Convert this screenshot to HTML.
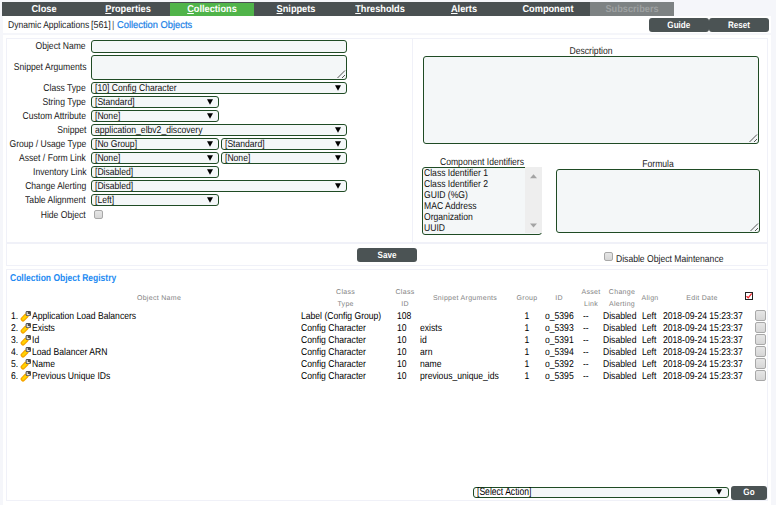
<!DOCTYPE html>
<html><head><meta charset="utf-8"><style>
html,body{margin:0;padding:0}
body{width:776px;height:505px;overflow:hidden;position:relative;background:#f5f6fa;font-family:"Liberation Sans",sans-serif}
body>div,body>svg{position:absolute}
.t{white-space:nowrap;font-variant-ligatures:none;text-rendering:geometricPrecision;-webkit-text-stroke:0}
u{text-decoration:underline}
</style></head><body>
<div style="left:2px;top:2px;width:672px;height:14px;background:#4a5052"></div>
<div class="t" style="left:2.0px;width:84px;text-align:center;top:2.94px;font-size:10px;line-height:14px;letter-spacing:0px;transform:scale(0.92,1);transform-origin:50% 10.46px;color:#fff;font-weight:bold;-webkit-text-stroke:0">Close</div>
<div class="t" style="left:86.0px;width:84px;text-align:center;top:2.94px;font-size:10px;line-height:14px;letter-spacing:0px;transform:scale(0.92,1);transform-origin:50% 10.46px;color:#fff;font-weight:bold;-webkit-text-stroke:0"><u>P</u>roperties</div>
<div style="left:170px;top:3px;width:84px;height:13px;background:#50b44a"></div>
<div class="t" style="left:170.0px;width:84px;text-align:center;top:2.94px;font-size:10px;line-height:14px;letter-spacing:0px;transform:scale(0.92,1);transform-origin:50% 10.46px;color:#fff;font-weight:bold;-webkit-text-stroke:0"><u>C</u>ollections</div>
<div class="t" style="left:254.0px;width:84px;text-align:center;top:2.94px;font-size:10px;line-height:14px;letter-spacing:0px;transform:scale(0.92,1);transform-origin:50% 10.46px;color:#fff;font-weight:bold;-webkit-text-stroke:0"><u>S</u>nippets</div>
<div class="t" style="left:338.0px;width:84px;text-align:center;top:2.94px;font-size:10px;line-height:14px;letter-spacing:0px;transform:scale(0.92,1);transform-origin:50% 10.46px;color:#fff;font-weight:bold;-webkit-text-stroke:0"><u>T</u>hresholds</div>
<div class="t" style="left:422.0px;width:84px;text-align:center;top:2.94px;font-size:10px;line-height:14px;letter-spacing:0px;transform:scale(0.92,1);transform-origin:50% 10.46px;color:#fff;font-weight:bold;-webkit-text-stroke:0"><u>A</u>lerts</div>
<div class="t" style="left:506.0px;width:84px;text-align:center;top:2.94px;font-size:10px;line-height:14px;letter-spacing:0px;transform:scale(0.92,1);transform-origin:50% 10.46px;color:#fff;font-weight:bold;-webkit-text-stroke:0">Component</div>
<div style="left:590px;top:2px;width:84px;height:14px;background:#7d8283"></div>
<div class="t" style="left:590.0px;width:84px;text-align:center;top:2.94px;font-size:10px;line-height:14px;letter-spacing:0px;transform:scale(0.92,1);transform-origin:50% 10.46px;color:#9da1a2;font-weight:bold;-webkit-text-stroke:0">Subscribers</div>
<div style="left:3px;top:16px;width:768px;height:16.5px;background:#fff"></div>
<div class="t" style="left:7.5px;top:19.17px;font-size:9.9px;line-height:14px;letter-spacing:0px;transform:scale(0.865,1);transform-origin:0 10.43px;color:#222">Dynamic Applications</div>
<div class="t" style="left:90.8px;top:19.17px;font-size:9.9px;line-height:14px;letter-spacing:0px;transform:scale(0.9,1);transform-origin:0 10.43px;color:#222">[561]</div>
<div class="t" style="left:112.2px;top:19.17px;font-size:9.9px;line-height:14px;letter-spacing:0px;transform:scale(0.9,1);transform-origin:0 10.43px;color:#555">|</div>
<div class="t" style="left:117px;top:19.17px;font-size:9.9px;line-height:14px;letter-spacing:0px;transform:scale(0.945,1);transform-origin:0 10.43px;color:#1a80e6;-webkit-text-stroke:0.2px currentColor">Collection Objects</div>
<div style="left:649px;top:18px;width:59.6px;height:14px;background:#4b5354;border-radius:3px"></div>
<div class="t" style="left:649.0px;width:59.6px;text-align:center;top:19.28px;font-size:9.3px;line-height:13px;letter-spacing:0px;transform:scale(0.87,1);transform-origin:50% 9.72px;color:#fff;font-weight:bold;-webkit-text-stroke:0">Guide</div>
<div style="left:709px;top:18px;width:60px;height:14px;background:#4b5354;border-radius:3px"></div>
<div class="t" style="left:709.0px;width:60px;text-align:center;top:19.28px;font-size:9.3px;line-height:13px;letter-spacing:0px;transform:scale(0.87,1);transform-origin:50% 9.72px;color:#fff;font-weight:bold;-webkit-text-stroke:0">Reset</div>
<div style="left:3px;top:34.6px;width:768px;height:471px;background:#fff"></div>
<div style="left:6px;top:37.5px;width:407px;height:206px;border:1.5px solid #f0f1f8;box-sizing:border-box"></div>
<div style="left:412px;top:37.5px;width:355.5px;height:206px;border:1.5px solid #f0f1f8;box-sizing:border-box"></div>
<div style="left:6px;top:242px;width:761.5px;height:24px;border:1.5px solid #f0f1f8;box-sizing:border-box"></div>
<div style="left:6px;top:269px;width:761.5px;height:232px;border:1.5px solid #f0f1f8;box-sizing:border-box"></div>
<div class="t" style="right:690px;top:39.87px;font-size:9.9px;line-height:14px;letter-spacing:0px;transform:scale(0.87,1);transform-origin:100% 10.43px;color:#1a1a1a">Object Name</div>
<div class="t" style="right:690px;top:61.07px;font-size:9.9px;line-height:14px;letter-spacing:0px;transform:scale(0.87,1);transform-origin:100% 10.43px;color:#1a1a1a">Snippet Arguments</div>
<div class="t" style="right:690px;top:81.87px;font-size:9.9px;line-height:14px;letter-spacing:0px;transform:scale(0.87,1);transform-origin:100% 10.43px;color:#1a1a1a">Class Type</div>
<div class="t" style="right:690px;top:95.87px;font-size:9.9px;line-height:14px;letter-spacing:0px;transform:scale(0.87,1);transform-origin:100% 10.43px;color:#1a1a1a">String Type</div>
<div class="t" style="right:690px;top:109.87px;font-size:9.9px;line-height:14px;letter-spacing:0px;transform:scale(0.87,1);transform-origin:100% 10.43px;color:#1a1a1a">Custom Attribute</div>
<div class="t" style="right:690px;top:123.87px;font-size:9.9px;line-height:14px;letter-spacing:0px;transform:scale(0.87,1);transform-origin:100% 10.43px;color:#1a1a1a">Snippet</div>
<div class="t" style="right:690px;top:137.87px;font-size:9.9px;line-height:14px;letter-spacing:0px;transform:scale(0.87,1);transform-origin:100% 10.43px;color:#1a1a1a">Group / Usage Type</div>
<div class="t" style="right:690px;top:151.87px;font-size:9.9px;line-height:14px;letter-spacing:0px;transform:scale(0.87,1);transform-origin:100% 10.43px;color:#1a1a1a">Asset / Form Link</div>
<div class="t" style="right:690px;top:165.87px;font-size:9.9px;line-height:14px;letter-spacing:0px;transform:scale(0.87,1);transform-origin:100% 10.43px;color:#1a1a1a">Inventory Link</div>
<div class="t" style="right:690px;top:179.87px;font-size:9.9px;line-height:14px;letter-spacing:0px;transform:scale(0.87,1);transform-origin:100% 10.43px;color:#1a1a1a">Change Alerting</div>
<div class="t" style="right:690px;top:193.87px;font-size:9.9px;line-height:14px;letter-spacing:0px;transform:scale(0.87,1);transform-origin:100% 10.43px;color:#1a1a1a">Table Alignment</div>
<div class="t" style="right:690px;top:208.77px;font-size:9.9px;line-height:14px;letter-spacing:0px;transform:scale(0.87,1);transform-origin:100% 10.43px;color:#1a1a1a">Hide Object</div>
<div style="left:91px;top:40px;width:256px;height:13px;background:#f4f7f8;border:1.5px solid #1f4b24;border-radius:3px;box-sizing:border-box"></div>
<div style="left:91px;top:55px;width:256px;height:25px;background:#f4f7f8;border:1.5px solid #1f4b24;border-radius:3px;box-sizing:border-box"></div>
<svg style="position:absolute;left:335.5px;top:68.5px" width="10" height="10"><path d="M1.5 9L9 1.5M6 9L9 6" stroke="#4a4a4a" stroke-width="0.95"/></svg>
<div style="left:91px;top:82px;width:256px;height:12px;background:#f4f7f8;border:1.5px solid #1f4b24;border-radius:3px;box-sizing:border-box"></div>
<div class="t" style="left:94.5px;top:81.77px;font-size:9.9px;line-height:14px;letter-spacing:0px;transform:scale(0.87,1);transform-origin:0 10.43px;color:#111">[10] Config Character</div>
<svg style="position:absolute;left:335px;top:85.3px" width="6" height="6"><path d="M0 0.2H6L3 5.8Z" fill="#000"/></svg>
<div style="left:91px;top:96px;width:128px;height:12px;background:#f4f7f8;border:1.5px solid #1f4b24;border-radius:3px;box-sizing:border-box"></div>
<div class="t" style="left:94.5px;top:95.77px;font-size:9.9px;line-height:14px;letter-spacing:0px;transform:scale(0.87,1);transform-origin:0 10.43px;color:#111">[Standard]</div>
<svg style="position:absolute;left:207px;top:99.3px" width="6" height="6"><path d="M0 0.2H6L3 5.8Z" fill="#000"/></svg>
<div style="left:91px;top:110px;width:128px;height:12px;background:#f4f7f8;border:1.5px solid #1f4b24;border-radius:3px;box-sizing:border-box"></div>
<div class="t" style="left:94.5px;top:109.77px;font-size:9.9px;line-height:14px;letter-spacing:0px;transform:scale(0.87,1);transform-origin:0 10.43px;color:#111">[None]</div>
<svg style="position:absolute;left:207px;top:113.3px" width="6" height="6"><path d="M0 0.2H6L3 5.8Z" fill="#000"/></svg>
<div style="left:91px;top:124px;width:256px;height:12px;background:#f4f7f8;border:1.5px solid #1f4b24;border-radius:3px;box-sizing:border-box"></div>
<div class="t" style="left:94.5px;top:123.77px;font-size:9.9px;line-height:14px;letter-spacing:0px;transform:scale(0.87,1);transform-origin:0 10.43px;color:#111">application_elbv2_discovery</div>
<svg style="position:absolute;left:335px;top:127.30000000000001px" width="6" height="6"><path d="M0 0.2H6L3 5.8Z" fill="#000"/></svg>
<div style="left:91px;top:138px;width:128px;height:12px;background:#f4f7f8;border:1.5px solid #1f4b24;border-radius:3px;box-sizing:border-box"></div>
<div class="t" style="left:94.5px;top:137.77px;font-size:9.9px;line-height:14px;letter-spacing:0px;transform:scale(0.87,1);transform-origin:0 10.43px;color:#111">[No Group]</div>
<svg style="position:absolute;left:207px;top:141.3px" width="6" height="6"><path d="M0 0.2H6L3 5.8Z" fill="#000"/></svg>
<div style="left:221.2px;top:138px;width:125.8px;height:12px;background:#f4f7f8;border:1.5px solid #1f4b24;border-radius:3px;box-sizing:border-box"></div>
<div class="t" style="left:224.7px;top:137.77px;font-size:9.9px;line-height:14px;letter-spacing:0px;transform:scale(0.87,1);transform-origin:0 10.43px;color:#111">[Standard]</div>
<svg style="position:absolute;left:335.0px;top:141.3px" width="6" height="6"><path d="M0 0.2H6L3 5.8Z" fill="#000"/></svg>
<div style="left:91px;top:152px;width:128px;height:12px;background:#f4f7f8;border:1.5px solid #1f4b24;border-radius:3px;box-sizing:border-box"></div>
<div class="t" style="left:94.5px;top:151.77px;font-size:9.9px;line-height:14px;letter-spacing:0px;transform:scale(0.87,1);transform-origin:0 10.43px;color:#111">[None]</div>
<svg style="position:absolute;left:207px;top:155.3px" width="6" height="6"><path d="M0 0.2H6L3 5.8Z" fill="#000"/></svg>
<div style="left:221.2px;top:152px;width:125.8px;height:12px;background:#f4f7f8;border:1.5px solid #1f4b24;border-radius:3px;box-sizing:border-box"></div>
<div class="t" style="left:224.7px;top:151.77px;font-size:9.9px;line-height:14px;letter-spacing:0px;transform:scale(0.87,1);transform-origin:0 10.43px;color:#111">[None]</div>
<svg style="position:absolute;left:335.0px;top:155.3px" width="6" height="6"><path d="M0 0.2H6L3 5.8Z" fill="#000"/></svg>
<div style="left:91px;top:166px;width:128px;height:12px;background:#f4f7f8;border:1.5px solid #1f4b24;border-radius:3px;box-sizing:border-box"></div>
<div class="t" style="left:94.5px;top:165.77px;font-size:9.9px;line-height:14px;letter-spacing:0px;transform:scale(0.87,1);transform-origin:0 10.43px;color:#111">[Disabled]</div>
<svg style="position:absolute;left:207px;top:169.3px" width="6" height="6"><path d="M0 0.2H6L3 5.8Z" fill="#000"/></svg>
<div style="left:91px;top:180px;width:256px;height:12px;background:#f4f7f8;border:1.5px solid #1f4b24;border-radius:3px;box-sizing:border-box"></div>
<div class="t" style="left:94.5px;top:179.77px;font-size:9.9px;line-height:14px;letter-spacing:0px;transform:scale(0.87,1);transform-origin:0 10.43px;color:#111">[Disabled]</div>
<svg style="position:absolute;left:335px;top:183.3px" width="6" height="6"><path d="M0 0.2H6L3 5.8Z" fill="#000"/></svg>
<div style="left:91px;top:194px;width:128px;height:12px;background:#f4f7f8;border:1.5px solid #1f4b24;border-radius:3px;box-sizing:border-box"></div>
<div class="t" style="left:94.5px;top:193.77px;font-size:9.9px;line-height:14px;letter-spacing:0px;transform:scale(0.87,1);transform-origin:0 10.43px;color:#111">[Left]</div>
<svg style="position:absolute;left:207px;top:197.3px" width="6" height="6"><path d="M0 0.2H6L3 5.8Z" fill="#000"/></svg>
<div style="left:94px;top:210px;width:9px;height:9px;background:linear-gradient(#e6e6e6,#d6d6d6);border:1px solid #a8a8a8;border-radius:2px;box-sizing:border-box"></div>
<div class="t" style="left:441.0px;width:300px;text-align:center;top:45.17px;font-size:9.9px;line-height:14px;letter-spacing:0px;transform:scale(0.87,1);transform-origin:50% 10.43px;color:#1a1a1a">Description</div>
<div style="left:423px;top:56px;width:336px;height:88px;background:#f4f7f8;border:1.5px solid #1f4b24;border-radius:3px;box-sizing:border-box"></div>
<svg style="position:absolute;left:747.5px;top:132.5px" width="10" height="10"><path d="M1.5 9L9 1.5M6 9L9 6" stroke="#4a4a4a" stroke-width="0.95"/></svg>
<div class="t" style="left:332.0px;width:300px;text-align:center;top:155.87px;font-size:9.9px;line-height:14px;letter-spacing:0px;transform:scale(0.87,1);transform-origin:50% 10.43px;color:#1a1a1a">Component Identifiers</div>
<div style="left:422px;top:167px;width:120px;height:68px;background:#f4f7f8;border:1.5px solid #1f4b24;border-radius:3px;box-sizing:border-box"></div>
<div style="left:525px;top:167px;width:17px;height:66px;background:#eeeeee"></div>
<svg style="position:absolute;left:530px;top:173.5px" width="7" height="5"><path d="M0 4.3L3.5 0.3L7 4.3Z" fill="#a3a3a3"/></svg>
<svg style="position:absolute;left:530px;top:222.5px" width="7" height="5"><path d="M0 0.5L3.5 4.5L7 0.5Z" fill="#a3a3a3"/></svg>
<div class="t" style="left:424.3px;top:166.67px;font-size:9.9px;line-height:14px;letter-spacing:0px;transform:scale(0.87,1);transform-origin:0 10.43px;color:#111">Class Identifier 1</div>
<div class="t" style="left:424.3px;top:177.67px;font-size:9.9px;line-height:14px;letter-spacing:0px;transform:scale(0.87,1);transform-origin:0 10.43px;color:#111">Class Identifier 2</div>
<div class="t" style="left:424.3px;top:188.67px;font-size:9.9px;line-height:14px;letter-spacing:0px;transform:scale(0.87,1);transform-origin:0 10.43px;color:#111">GUID (%G)</div>
<div class="t" style="left:424.3px;top:199.67px;font-size:9.9px;line-height:14px;letter-spacing:0px;transform:scale(0.87,1);transform-origin:0 10.43px;color:#111">MAC Address</div>
<div class="t" style="left:424.3px;top:210.67px;font-size:9.9px;line-height:14px;letter-spacing:0px;transform:scale(0.87,1);transform-origin:0 10.43px;color:#111">Organization</div>
<div class="t" style="left:424.3px;top:221.67px;font-size:9.9px;line-height:14px;letter-spacing:0px;transform:scale(0.87,1);transform-origin:0 10.43px;color:#111">UUID</div>
<div class="t" style="left:508.0px;width:300px;text-align:center;top:158.17px;font-size:9.9px;line-height:14px;letter-spacing:0px;transform:scale(0.87,1);transform-origin:50% 10.43px;color:#1a1a1a">Formula</div>
<div style="left:556px;top:169px;width:204px;height:64px;background:#f4f7f8;border:1.5px solid #1f4b24;border-radius:3px;box-sizing:border-box"></div>
<svg style="position:absolute;left:748.5px;top:221.5px" width="10" height="10"><path d="M1.5 9L9 1.5M6 9L9 6" stroke="#4a4a4a" stroke-width="0.95"/></svg>
<div style="left:357px;top:248px;width:60px;height:14px;background:#4b5354;border-radius:3px"></div>
<div class="t" style="left:357.0px;width:60px;text-align:center;top:249.28px;font-size:9.3px;line-height:13px;letter-spacing:0px;transform:scale(0.87,1);transform-origin:50% 9.72px;color:#fff;font-weight:bold;-webkit-text-stroke:0">Save</div>
<div style="left:604px;top:252px;width:9px;height:9px;background:linear-gradient(#e6e6e6,#d6d6d6);border:1px solid #a8a8a8;border-radius:2px;box-sizing:border-box"></div>
<div class="t" style="left:616px;top:253.17px;font-size:9.9px;line-height:14px;letter-spacing:0px;transform:scale(0.87,1);transform-origin:0 10.43px;color:#1a1a1a">Disable Object Maintenance</div>
<div class="t" style="left:10.3px;top:271.77px;font-size:9.9px;line-height:14px;letter-spacing:0px;transform:scale(0.86,1);transform-origin:0 10.43px;color:#228af2;font-weight:bold;-webkit-text-stroke:0">Collection Object Registry</div>
<div class="t" style="left:9.0px;width:300px;text-align:center;top:294.17px;font-size:7px;line-height:10px;letter-spacing:0.3px;transform:scale(1,1);transform-origin:50% 7.43px;color:#838383;-webkit-text-stroke:0">Object Name</div>
<div class="t" style="left:195.60000000000002px;width:300px;text-align:center;top:288.17px;font-size:7px;line-height:10px;letter-spacing:0.3px;transform:scale(1,1);transform-origin:50% 7.43px;color:#838383;-webkit-text-stroke:0">Class</div>
<div class="t" style="left:195.60000000000002px;width:300px;text-align:center;top:300.17px;font-size:7px;line-height:10px;letter-spacing:0.3px;transform:scale(1,1);transform-origin:50% 7.43px;color:#838383;-webkit-text-stroke:0">Type</div>
<div class="t" style="left:255.0px;width:300px;text-align:center;top:288.17px;font-size:7px;line-height:10px;letter-spacing:0.3px;transform:scale(1,1);transform-origin:50% 7.43px;color:#838383;-webkit-text-stroke:0">Class</div>
<div class="t" style="left:255.0px;width:300px;text-align:center;top:300.17px;font-size:7px;line-height:10px;letter-spacing:0.3px;transform:scale(1,1);transform-origin:50% 7.43px;color:#838383;-webkit-text-stroke:0">ID</div>
<div class="t" style="left:315.0px;width:300px;text-align:center;top:294.17px;font-size:7px;line-height:10px;letter-spacing:0.3px;transform:scale(1,1);transform-origin:50% 7.43px;color:#838383;-webkit-text-stroke:0">Snippet Arguments</div>
<div class="t" style="left:377.0px;width:300px;text-align:center;top:294.17px;font-size:7px;line-height:10px;letter-spacing:0.3px;transform:scale(1,1);transform-origin:50% 7.43px;color:#838383;-webkit-text-stroke:0">Group</div>
<div class="t" style="left:409.0px;width:300px;text-align:center;top:294.17px;font-size:7px;line-height:10px;letter-spacing:0.3px;transform:scale(1,1);transform-origin:50% 7.43px;color:#838383;-webkit-text-stroke:0">ID</div>
<div class="t" style="left:441.0px;width:300px;text-align:center;top:288.17px;font-size:7px;line-height:10px;letter-spacing:0.3px;transform:scale(1,1);transform-origin:50% 7.43px;color:#838383;-webkit-text-stroke:0">Asset</div>
<div class="t" style="left:441.0px;width:300px;text-align:center;top:300.17px;font-size:7px;line-height:10px;letter-spacing:0.3px;transform:scale(1,1);transform-origin:50% 7.43px;color:#838383;-webkit-text-stroke:0">Link</div>
<div class="t" style="left:472.0px;width:300px;text-align:center;top:288.17px;font-size:7px;line-height:10px;letter-spacing:0.3px;transform:scale(1,1);transform-origin:50% 7.43px;color:#838383;-webkit-text-stroke:0">Change</div>
<div class="t" style="left:472.0px;width:300px;text-align:center;top:300.17px;font-size:7px;line-height:10px;letter-spacing:0.3px;transform:scale(1,1);transform-origin:50% 7.43px;color:#838383;-webkit-text-stroke:0">Alerting</div>
<div class="t" style="left:500.0px;width:300px;text-align:center;top:294.17px;font-size:7px;line-height:10px;letter-spacing:0.3px;transform:scale(1,1);transform-origin:50% 7.43px;color:#838383;-webkit-text-stroke:0">Align</div>
<div class="t" style="left:552.0px;width:300px;text-align:center;top:294.17px;font-size:7px;line-height:10px;letter-spacing:0.3px;transform:scale(1,1);transform-origin:50% 7.43px;color:#838383;-webkit-text-stroke:0">Edit Date</div>
<div style="left:745px;top:292px;width:8px;height:8px;border:1px solid #222;background:#fff;box-sizing:border-box"></div>
<svg style="position:absolute;left:746px;top:293px" width="6" height="6"><path d="M0.8 3.6L2.2 4.8L5.4 0.9" stroke="#f0282d" stroke-width="1.3" fill="none" stroke-linecap="round"/></svg>
<div class="t" style="left:10.6px;top:310.17px;font-size:9.9px;line-height:14px;letter-spacing:0px;transform:scale(0.87,1);transform-origin:0 10.43px;color:#000">1.</div>
<svg style="position:absolute;left:20px;top:310.2px" width="12" height="12" viewBox="0 0 12 12"><path d="M3 9.1L6.3 5.8" stroke="#f7a600" stroke-width="4.8" stroke-linecap="round"/><path d="M3.2 8.8L6 6" stroke="#ffd400" stroke-width="2.4" stroke-linecap="round"/><rect x="5.7" y="0.9" width="5.3" height="5.2" rx="1.3" fill="#4d4d4d"/><path d="M7.2 2V4.6H9.6" stroke="#e8e8e8" stroke-width="1.1" fill="none"/></svg>
<div class="t" style="left:32.1px;top:310.17px;font-size:9.9px;line-height:14px;letter-spacing:0px;transform:scale(0.87,1);transform-origin:0 10.43px;color:#000">Application Load Balancers</div>
<div class="t" style="left:300.6px;top:310.17px;font-size:9.9px;line-height:14px;letter-spacing:0px;transform:scale(0.87,1);transform-origin:0 10.43px;color:#000">Label (Config Group)</div>
<div class="t" style="left:397.4px;top:310.17px;font-size:9.9px;line-height:14px;letter-spacing:0px;transform:scale(0.87,1);transform-origin:0 10.43px;color:#000">108</div>
<div class="t" style="left:420px;top:310.17px;font-size:9.9px;line-height:14px;letter-spacing:0px;transform:scale(0.87,1);transform-origin:0 10.43px;color:#000"></div>
<div class="t" style="left:516.5px;width:20px;text-align:center;top:310.17px;font-size:9.9px;line-height:14px;letter-spacing:0px;transform:scale(0.87,1);transform-origin:50% 10.43px;color:#000">1</div>
<div class="t" style="left:545.4px;top:310.17px;font-size:9.9px;line-height:14px;letter-spacing:0px;transform:scale(0.87,1);transform-origin:0 10.43px;color:#000">o_5396</div>
<div class="t" style="left:582.7px;top:310.17px;font-size:9.9px;line-height:14px;letter-spacing:0px;transform:scale(0.87,1);transform-origin:0 10.43px;color:#000">--</div>
<div class="t" style="left:603.2px;top:310.17px;font-size:9.9px;line-height:14px;letter-spacing:0px;transform:scale(0.87,1);transform-origin:0 10.43px;color:#000">Disabled</div>
<div class="t" style="left:642px;top:310.17px;font-size:9.9px;line-height:14px;letter-spacing:0px;transform:scale(0.87,1);transform-origin:0 10.43px;color:#000">Left</div>
<div class="t" style="left:662.6px;top:310.17px;font-size:9.9px;line-height:14px;letter-spacing:0px;transform:scale(0.87,1);transform-origin:0 10.43px;color:#000">2018-09-24 15:23:37</div>
<div style="left:755px;top:310px;width:11px;height:11px;background:linear-gradient(#e6e6e6,#d6d6d6);border:1px solid #a8a8a8;border-radius:2px;box-sizing:border-box"></div>
<div class="t" style="left:10.6px;top:322.17px;font-size:9.9px;line-height:14px;letter-spacing:0px;transform:scale(0.87,1);transform-origin:0 10.43px;color:#000">2.</div>
<svg style="position:absolute;left:20px;top:322.2px" width="12" height="12" viewBox="0 0 12 12"><path d="M3 9.1L6.3 5.8" stroke="#f7a600" stroke-width="4.8" stroke-linecap="round"/><path d="M3.2 8.8L6 6" stroke="#ffd400" stroke-width="2.4" stroke-linecap="round"/><rect x="5.7" y="0.9" width="5.3" height="5.2" rx="1.3" fill="#4d4d4d"/><path d="M7.2 2V4.6H9.6" stroke="#e8e8e8" stroke-width="1.1" fill="none"/></svg>
<div class="t" style="left:32.1px;top:322.17px;font-size:9.9px;line-height:14px;letter-spacing:0px;transform:scale(0.87,1);transform-origin:0 10.43px;color:#000">Exists</div>
<div class="t" style="left:300.6px;top:322.17px;font-size:9.9px;line-height:14px;letter-spacing:0px;transform:scale(0.87,1);transform-origin:0 10.43px;color:#000">Config Character</div>
<div class="t" style="left:397.4px;top:322.17px;font-size:9.9px;line-height:14px;letter-spacing:0px;transform:scale(0.87,1);transform-origin:0 10.43px;color:#000">10</div>
<div class="t" style="left:420px;top:322.17px;font-size:9.9px;line-height:14px;letter-spacing:0px;transform:scale(0.87,1);transform-origin:0 10.43px;color:#000">exists</div>
<div class="t" style="left:516.5px;width:20px;text-align:center;top:322.17px;font-size:9.9px;line-height:14px;letter-spacing:0px;transform:scale(0.87,1);transform-origin:50% 10.43px;color:#000">1</div>
<div class="t" style="left:545.4px;top:322.17px;font-size:9.9px;line-height:14px;letter-spacing:0px;transform:scale(0.87,1);transform-origin:0 10.43px;color:#000">o_5393</div>
<div class="t" style="left:582.7px;top:322.17px;font-size:9.9px;line-height:14px;letter-spacing:0px;transform:scale(0.87,1);transform-origin:0 10.43px;color:#000">--</div>
<div class="t" style="left:603.2px;top:322.17px;font-size:9.9px;line-height:14px;letter-spacing:0px;transform:scale(0.87,1);transform-origin:0 10.43px;color:#000">Disabled</div>
<div class="t" style="left:642px;top:322.17px;font-size:9.9px;line-height:14px;letter-spacing:0px;transform:scale(0.87,1);transform-origin:0 10.43px;color:#000">Left</div>
<div class="t" style="left:662.6px;top:322.17px;font-size:9.9px;line-height:14px;letter-spacing:0px;transform:scale(0.87,1);transform-origin:0 10.43px;color:#000">2018-09-24 15:23:37</div>
<div style="left:755px;top:322px;width:11px;height:11px;background:linear-gradient(#e6e6e6,#d6d6d6);border:1px solid #a8a8a8;border-radius:2px;box-sizing:border-box"></div>
<div class="t" style="left:10.6px;top:334.17px;font-size:9.9px;line-height:14px;letter-spacing:0px;transform:scale(0.87,1);transform-origin:0 10.43px;color:#000">3.</div>
<svg style="position:absolute;left:20px;top:334.2px" width="12" height="12" viewBox="0 0 12 12"><path d="M3 9.1L6.3 5.8" stroke="#f7a600" stroke-width="4.8" stroke-linecap="round"/><path d="M3.2 8.8L6 6" stroke="#ffd400" stroke-width="2.4" stroke-linecap="round"/><rect x="5.7" y="0.9" width="5.3" height="5.2" rx="1.3" fill="#4d4d4d"/><path d="M7.2 2V4.6H9.6" stroke="#e8e8e8" stroke-width="1.1" fill="none"/></svg>
<div class="t" style="left:32.1px;top:334.17px;font-size:9.9px;line-height:14px;letter-spacing:0px;transform:scale(0.87,1);transform-origin:0 10.43px;color:#000">Id</div>
<div class="t" style="left:300.6px;top:334.17px;font-size:9.9px;line-height:14px;letter-spacing:0px;transform:scale(0.87,1);transform-origin:0 10.43px;color:#000">Config Character</div>
<div class="t" style="left:397.4px;top:334.17px;font-size:9.9px;line-height:14px;letter-spacing:0px;transform:scale(0.87,1);transform-origin:0 10.43px;color:#000">10</div>
<div class="t" style="left:420px;top:334.17px;font-size:9.9px;line-height:14px;letter-spacing:0px;transform:scale(0.87,1);transform-origin:0 10.43px;color:#000">id</div>
<div class="t" style="left:516.5px;width:20px;text-align:center;top:334.17px;font-size:9.9px;line-height:14px;letter-spacing:0px;transform:scale(0.87,1);transform-origin:50% 10.43px;color:#000">1</div>
<div class="t" style="left:545.4px;top:334.17px;font-size:9.9px;line-height:14px;letter-spacing:0px;transform:scale(0.87,1);transform-origin:0 10.43px;color:#000">o_5391</div>
<div class="t" style="left:582.7px;top:334.17px;font-size:9.9px;line-height:14px;letter-spacing:0px;transform:scale(0.87,1);transform-origin:0 10.43px;color:#000">--</div>
<div class="t" style="left:603.2px;top:334.17px;font-size:9.9px;line-height:14px;letter-spacing:0px;transform:scale(0.87,1);transform-origin:0 10.43px;color:#000">Disabled</div>
<div class="t" style="left:642px;top:334.17px;font-size:9.9px;line-height:14px;letter-spacing:0px;transform:scale(0.87,1);transform-origin:0 10.43px;color:#000">Left</div>
<div class="t" style="left:662.6px;top:334.17px;font-size:9.9px;line-height:14px;letter-spacing:0px;transform:scale(0.87,1);transform-origin:0 10.43px;color:#000">2018-09-24 15:23:37</div>
<div style="left:755px;top:334px;width:11px;height:11px;background:linear-gradient(#e6e6e6,#d6d6d6);border:1px solid #a8a8a8;border-radius:2px;box-sizing:border-box"></div>
<div class="t" style="left:10.6px;top:346.17px;font-size:9.9px;line-height:14px;letter-spacing:0px;transform:scale(0.87,1);transform-origin:0 10.43px;color:#000">4.</div>
<svg style="position:absolute;left:20px;top:346.2px" width="12" height="12" viewBox="0 0 12 12"><path d="M3 9.1L6.3 5.8" stroke="#f7a600" stroke-width="4.8" stroke-linecap="round"/><path d="M3.2 8.8L6 6" stroke="#ffd400" stroke-width="2.4" stroke-linecap="round"/><rect x="5.7" y="0.9" width="5.3" height="5.2" rx="1.3" fill="#4d4d4d"/><path d="M7.2 2V4.6H9.6" stroke="#e8e8e8" stroke-width="1.1" fill="none"/></svg>
<div class="t" style="left:32.1px;top:346.17px;font-size:9.9px;line-height:14px;letter-spacing:0px;transform:scale(0.87,1);transform-origin:0 10.43px;color:#000">Load Balancer ARN</div>
<div class="t" style="left:300.6px;top:346.17px;font-size:9.9px;line-height:14px;letter-spacing:0px;transform:scale(0.87,1);transform-origin:0 10.43px;color:#000">Config Character</div>
<div class="t" style="left:397.4px;top:346.17px;font-size:9.9px;line-height:14px;letter-spacing:0px;transform:scale(0.87,1);transform-origin:0 10.43px;color:#000">10</div>
<div class="t" style="left:420px;top:346.17px;font-size:9.9px;line-height:14px;letter-spacing:0px;transform:scale(0.87,1);transform-origin:0 10.43px;color:#000">arn</div>
<div class="t" style="left:516.5px;width:20px;text-align:center;top:346.17px;font-size:9.9px;line-height:14px;letter-spacing:0px;transform:scale(0.87,1);transform-origin:50% 10.43px;color:#000">1</div>
<div class="t" style="left:545.4px;top:346.17px;font-size:9.9px;line-height:14px;letter-spacing:0px;transform:scale(0.87,1);transform-origin:0 10.43px;color:#000">o_5394</div>
<div class="t" style="left:582.7px;top:346.17px;font-size:9.9px;line-height:14px;letter-spacing:0px;transform:scale(0.87,1);transform-origin:0 10.43px;color:#000">--</div>
<div class="t" style="left:603.2px;top:346.17px;font-size:9.9px;line-height:14px;letter-spacing:0px;transform:scale(0.87,1);transform-origin:0 10.43px;color:#000">Disabled</div>
<div class="t" style="left:642px;top:346.17px;font-size:9.9px;line-height:14px;letter-spacing:0px;transform:scale(0.87,1);transform-origin:0 10.43px;color:#000">Left</div>
<div class="t" style="left:662.6px;top:346.17px;font-size:9.9px;line-height:14px;letter-spacing:0px;transform:scale(0.87,1);transform-origin:0 10.43px;color:#000">2018-09-24 15:23:37</div>
<div style="left:755px;top:346px;width:11px;height:11px;background:linear-gradient(#e6e6e6,#d6d6d6);border:1px solid #a8a8a8;border-radius:2px;box-sizing:border-box"></div>
<div class="t" style="left:10.6px;top:358.17px;font-size:9.9px;line-height:14px;letter-spacing:0px;transform:scale(0.87,1);transform-origin:0 10.43px;color:#000">5.</div>
<svg style="position:absolute;left:20px;top:358.2px" width="12" height="12" viewBox="0 0 12 12"><path d="M3 9.1L6.3 5.8" stroke="#f7a600" stroke-width="4.8" stroke-linecap="round"/><path d="M3.2 8.8L6 6" stroke="#ffd400" stroke-width="2.4" stroke-linecap="round"/><rect x="5.7" y="0.9" width="5.3" height="5.2" rx="1.3" fill="#4d4d4d"/><path d="M7.2 2V4.6H9.6" stroke="#e8e8e8" stroke-width="1.1" fill="none"/></svg>
<div class="t" style="left:32.1px;top:358.17px;font-size:9.9px;line-height:14px;letter-spacing:0px;transform:scale(0.87,1);transform-origin:0 10.43px;color:#000">Name</div>
<div class="t" style="left:300.6px;top:358.17px;font-size:9.9px;line-height:14px;letter-spacing:0px;transform:scale(0.87,1);transform-origin:0 10.43px;color:#000">Config Character</div>
<div class="t" style="left:397.4px;top:358.17px;font-size:9.9px;line-height:14px;letter-spacing:0px;transform:scale(0.87,1);transform-origin:0 10.43px;color:#000">10</div>
<div class="t" style="left:420px;top:358.17px;font-size:9.9px;line-height:14px;letter-spacing:0px;transform:scale(0.87,1);transform-origin:0 10.43px;color:#000">name</div>
<div class="t" style="left:516.5px;width:20px;text-align:center;top:358.17px;font-size:9.9px;line-height:14px;letter-spacing:0px;transform:scale(0.87,1);transform-origin:50% 10.43px;color:#000">1</div>
<div class="t" style="left:545.4px;top:358.17px;font-size:9.9px;line-height:14px;letter-spacing:0px;transform:scale(0.87,1);transform-origin:0 10.43px;color:#000">o_5392</div>
<div class="t" style="left:582.7px;top:358.17px;font-size:9.9px;line-height:14px;letter-spacing:0px;transform:scale(0.87,1);transform-origin:0 10.43px;color:#000">--</div>
<div class="t" style="left:603.2px;top:358.17px;font-size:9.9px;line-height:14px;letter-spacing:0px;transform:scale(0.87,1);transform-origin:0 10.43px;color:#000">Disabled</div>
<div class="t" style="left:642px;top:358.17px;font-size:9.9px;line-height:14px;letter-spacing:0px;transform:scale(0.87,1);transform-origin:0 10.43px;color:#000">Left</div>
<div class="t" style="left:662.6px;top:358.17px;font-size:9.9px;line-height:14px;letter-spacing:0px;transform:scale(0.87,1);transform-origin:0 10.43px;color:#000">2018-09-24 15:23:37</div>
<div style="left:755px;top:358px;width:11px;height:11px;background:linear-gradient(#e6e6e6,#d6d6d6);border:1px solid #a8a8a8;border-radius:2px;box-sizing:border-box"></div>
<div class="t" style="left:10.6px;top:370.17px;font-size:9.9px;line-height:14px;letter-spacing:0px;transform:scale(0.87,1);transform-origin:0 10.43px;color:#000">6.</div>
<svg style="position:absolute;left:20px;top:370.2px" width="12" height="12" viewBox="0 0 12 12"><path d="M3 9.1L6.3 5.8" stroke="#f7a600" stroke-width="4.8" stroke-linecap="round"/><path d="M3.2 8.8L6 6" stroke="#ffd400" stroke-width="2.4" stroke-linecap="round"/><rect x="5.7" y="0.9" width="5.3" height="5.2" rx="1.3" fill="#4d4d4d"/><path d="M7.2 2V4.6H9.6" stroke="#e8e8e8" stroke-width="1.1" fill="none"/></svg>
<div class="t" style="left:32.1px;top:370.17px;font-size:9.9px;line-height:14px;letter-spacing:0px;transform:scale(0.87,1);transform-origin:0 10.43px;color:#000">Previous Unique IDs</div>
<div class="t" style="left:300.6px;top:370.17px;font-size:9.9px;line-height:14px;letter-spacing:0px;transform:scale(0.87,1);transform-origin:0 10.43px;color:#000">Config Character</div>
<div class="t" style="left:397.4px;top:370.17px;font-size:9.9px;line-height:14px;letter-spacing:0px;transform:scale(0.87,1);transform-origin:0 10.43px;color:#000">10</div>
<div class="t" style="left:420px;top:370.17px;font-size:9.9px;line-height:14px;letter-spacing:0px;transform:scale(0.87,1);transform-origin:0 10.43px;color:#000">previous_unique_ids</div>
<div class="t" style="left:516.5px;width:20px;text-align:center;top:370.17px;font-size:9.9px;line-height:14px;letter-spacing:0px;transform:scale(0.87,1);transform-origin:50% 10.43px;color:#000">1</div>
<div class="t" style="left:545.4px;top:370.17px;font-size:9.9px;line-height:14px;letter-spacing:0px;transform:scale(0.87,1);transform-origin:0 10.43px;color:#000">o_5395</div>
<div class="t" style="left:582.7px;top:370.17px;font-size:9.9px;line-height:14px;letter-spacing:0px;transform:scale(0.87,1);transform-origin:0 10.43px;color:#000">--</div>
<div class="t" style="left:603.2px;top:370.17px;font-size:9.9px;line-height:14px;letter-spacing:0px;transform:scale(0.87,1);transform-origin:0 10.43px;color:#000">Disabled</div>
<div class="t" style="left:642px;top:370.17px;font-size:9.9px;line-height:14px;letter-spacing:0px;transform:scale(0.87,1);transform-origin:0 10.43px;color:#000">Left</div>
<div class="t" style="left:662.6px;top:370.17px;font-size:9.9px;line-height:14px;letter-spacing:0px;transform:scale(0.87,1);transform-origin:0 10.43px;color:#000">2018-09-24 15:23:37</div>
<div style="left:755px;top:370px;width:11px;height:11px;background:linear-gradient(#e6e6e6,#d6d6d6);border:1px solid #a8a8a8;border-radius:2px;box-sizing:border-box"></div>
<div style="left:473px;top:487px;width:256px;height:11px;background:#f4f7f8;border:1.5px solid #1f4b24;border-radius:3px;box-sizing:border-box"></div>
<div class="t" style="left:476px;top:488px;height:9px;background:#fff;width:55px"></div>
<div class="t" style="left:477.4px;top:485.43px;font-size:10.6px;line-height:15px;letter-spacing:0px;transform:scale(0.81,1);transform-origin:0 11.17px;color:#000">[Select Action]</div>
<svg style="position:absolute;left:716.3px;top:489px" width="6" height="6"><path d="M0 0.2H6L3 5.8Z" fill="#000"/></svg>
<div style="left:731px;top:486px;width:36px;height:14px;background:#4b5354;border-radius:3px"></div>
<div class="t" style="left:731.0px;width:36px;text-align:center;top:486.48px;font-size:9.3px;line-height:13px;letter-spacing:0px;transform:scale(0.87,1);transform-origin:50% 9.72px;color:#fff;font-weight:bold;-webkit-text-stroke:0">Go</div>
</body></html>
